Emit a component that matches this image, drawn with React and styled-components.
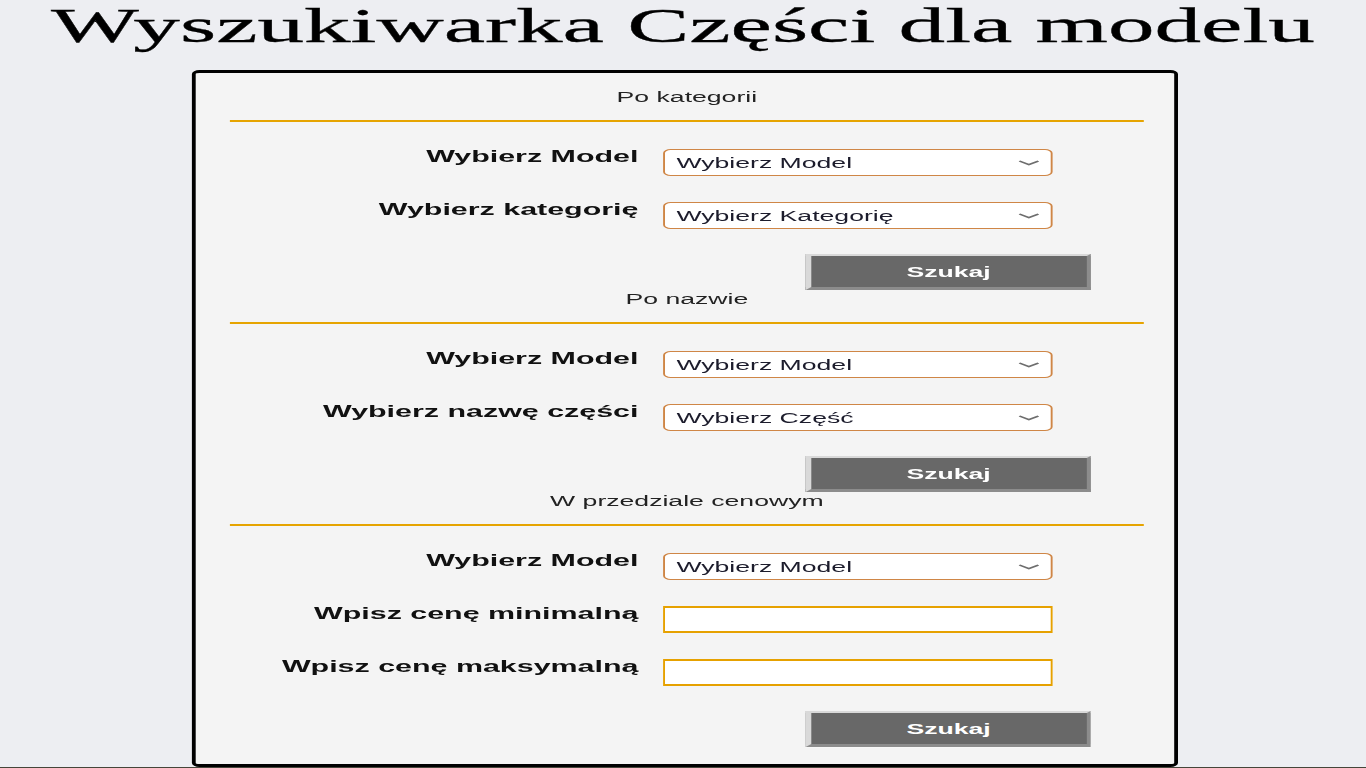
import React from 'react';
import styled, {createGlobalStyle} from 'styled-components';

// the reference is drawn stretched sideways, so the page is laid out narrow and widened
const ROZCIAG = 1.9;

const chevron = encodeURIComponent(
  "<svg xmlns='http://www.w3.org/2000/svg' width='11' height='6' viewBox='0 0 11 6'><path d='M0.5 1 L5.5 4.6 L10.5 1' fill='none' stroke='#6e6e6e' stroke-width='1.5'/></svg>"
);

const Global = createGlobalStyle`
  html, body {
    margin: 0;
    padding: 0;
    background: #edeef2;
    overflow: hidden;
  }
  * { box-sizing: border-box; }
`;

const Strona = styled.div`
  height: 768px;
  border-bottom: 1px solid #45453a;
  overflow: hidden;
`;

const Scena = styled.div`
  width: ${1366 / ROZCIAG}px;
  transform: scaleX(${ROZCIAG});
  transform-origin: 0 0;
`;

const Tytul = styled.h1`
  margin: 0;
  padding-top: 3px;
  font-family: "Liberation Serif", "Times New Roman", serif;
  font-weight: normal;
  font-size: 49px;
  line-height: 46px;
  color: #000;
  text-align: center;
  white-space: nowrap;
  -webkit-text-stroke: 0.3px #000;
`;

const Panel = styled.div`
  margin: 21px 0 0 101px;
  width: 518.5px;
  height: 697px;
  background: #f4f4f4;
  border: 3px solid #000;
  border-left-width: 2.4px;
  border-right-width: 2.4px;
  border-radius: 4px;
  padding: 15px 15.5px 0 18px;
  font-family: "Liberation Sans", Arial, sans-serif;
`;

const Sekcja = styled.section`
  display: flex;
  flex-direction: column;
`;

const Naglowek = styled.div`
  font-size: 14px;
  line-height: 18px;
  color: #222;
  text-align: center;
`;

const Linia = styled.div`
  margin: 14px 0 27px;
  height: 2px;
  background: #e6a400;
`;

const Wiersz = styled.div`
  display: flex;
  align-items: flex-start;
  gap: 13px;
  height: 27px;
  margin-bottom: 26px;
  &:last-of-type { margin-bottom: 25px; }
`;

const Etykieta = styled.label`
  width: 215px;
  text-align: right;
  font-weight: bold;
  font-size: 16px;
  line-height: 16px;
  color: #111;
  white-space: nowrap;
`;

const Lista = styled.select`
  appearance: none;
  width: 205px;
  height: 27px;
  padding: 0 0 0 6px;
  border: 1px solid #cf8646;
  border-left-width: 1.6px;
  border-right-width: 1.6px;
  border-radius: 4px;
  background: #fff url("data:image/svg+xml,${chevron}") no-repeat right 6px center;
  font-family: "Liberation Sans", Arial, sans-serif;
  font-size: 14px;
  color: #1c1c2c;
  outline: none;
`;

const Pole = styled.input`
  width: 205px;
  height: 27px;
  border: 2px solid #e6a100;
  border-left-width: 1.1px;
  border-right-width: 1.1px;
  border-radius: 0;
  background: #fff;
  font-family: "Liberation Sans", Arial, sans-serif;
  font-size: 14px;
  outline: none;
`;

const Przycisk = styled.button`
  margin-left: 303px;
  width: 149.5px;
  height: 36px;
  background: #686868;
  border-style: solid;
  border-width: 2px 2.6px 3px 3.2px;
  border-color: #d9d9d9 #8c8c8c #8c8c8c #d9d9d9;
  color: #fff;
  font-family: "Liberation Sans", Arial, sans-serif;
  font-weight: bold;
  font-size: 14px;
  padding: 0;
  cursor: pointer;
`;

const modele = ['Wybierz Model'];

function Wybor({etykieta, opcje}){
  return (
    <Wiersz>
      <Etykieta>{etykieta}</Etykieta>
      <Lista defaultValue={opcje[0]}>
        {opcje.map(o => <option key={o}>{o}</option>)}
      </Lista>
    </Wiersz>
  );
}

function Cena({etykieta}){
  return (
    <Wiersz>
      <Etykieta>{etykieta}</Etykieta>
      <Pole type="text" />
    </Wiersz>
  );
}

export default function App(){
  return (
    <Strona>
      <Global />
      <Scena>
        <Tytul>Wyszukiwarka Części dla modelu</Tytul>
        <Panel>
          <Sekcja>
            <Naglowek>Po kategorii</Naglowek>
            <Linia />
            <Wybor etykieta="Wybierz Model" opcje={modele} />
            <Wybor etykieta="Wybierz kategorię" opcje={['Wybierz Kategorię']} />
            <Przycisk>Szukaj</Przycisk>
          </Sekcja>
          <Sekcja>
            <Naglowek>Po nazwie</Naglowek>
            <Linia />
            <Wybor etykieta="Wybierz Model" opcje={modele} />
            <Wybor etykieta="Wybierz nazwę części" opcje={['Wybierz Część']} />
            <Przycisk>Szukaj</Przycisk>
          </Sekcja>
          <Sekcja>
            <Naglowek>W przedziale cenowym</Naglowek>
            <Linia />
            <Wybor etykieta="Wybierz Model" opcje={modele} />
            <Cena etykieta="Wpisz cenę minimalną" />
            <Cena etykieta="Wpisz cenę maksymalną" />
            <Przycisk>Szukaj</Przycisk>
          </Sekcja>
        </Panel>
      </Scena>
    </Strona>
  );
}
